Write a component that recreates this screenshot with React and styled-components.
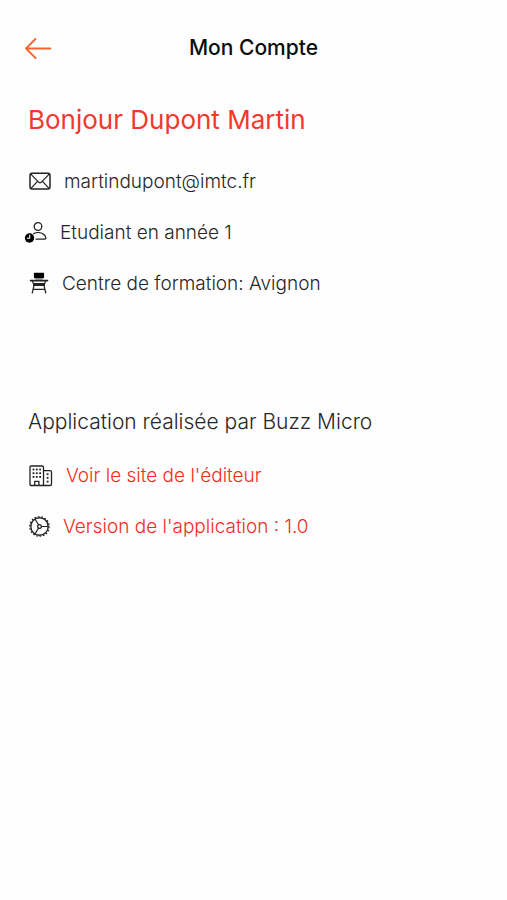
import React from "react";
import styled, { createGlobalStyle } from "styled-components";

const GlobalStyle = createGlobalStyle`
  *, *::before, *::after { box-sizing: border-box; }
  body {
    margin: 0;
    background: #fefefe;
    color: #262628;
    font-family: Inter, "Liberation Sans", sans-serif;
  }
`;

const Page = styled.div`
  min-height: 100vh;
`;

const Header = styled.header`
  display: grid;
  grid-template-columns: 1fr auto 1fr;
  align-items: center;
  height: 56px;
  margin-top: 20px;
  padding: 0 24px;
`;

const BackButton = styled.button`
  display: flex;
  justify-self: start;
  padding: 0;
  border: 0;
  background: none;
  color: #f3672f;
  cursor: pointer;
`;

const PageTitle = styled.h1`
  margin: 0;
  font-size: 21px;
  line-height: 24px;
  font-weight: 500;
  color: #0c0c0c;
`;

const Main = styled.main`
  padding: 0 28px;
`;

const Greeting = styled.h2`
  margin: 28px 0 20px;
  font-size: 26px;
  line-height: 32px;
  font-weight: 400;
  color: #f2382c;
`;

const List = styled.ul`
  display: grid;
  grid-auto-rows: 51px;
  margin: 0;
  padding: 0;
  list-style: none;
`;

const Item = styled.li`
  display: flex;
  align-items: center;
  gap: 12px;
  font-size: 19px;
  line-height: 24px;
  font-weight: 300;
  color: ${(p) => (p.$accent ? "#f22c25" : "inherit")};
`;

const Icon = styled.svg`
  flex: none;
  height: 24px;
  overflow: visible;
  fill: none;
  stroke: currentColor;
  stroke-width: 1.5;
  stroke-linecap: round;
  stroke-linejoin: round;
  color: #222;
`;

const EditorLink = styled.a`
  color: inherit;
  text-decoration: none;
`;

const About = styled.section`
  margin-top: 99px;
`;

const AboutTitle = styled.h3`
  margin: 0 0 14px;
  font-size: 21px;
  line-height: 28px;
  font-weight: 300;
`;

const ArrowIcon = () => (
  <svg width="28" height="24" viewBox="0 0 28 24" fill="none" stroke="currentColor" strokeWidth="1.8" strokeLinecap="round" strokeLinejoin="round" aria-hidden="true">
    <path d="M26.5 12.500H2M11.5 3 2 12.500l9.500 9.500" />
  </svg>
);

const MailIcon = () => (
  <Icon width="24" viewBox="0 0 24 24" aria-hidden="true">
    <rect x="2" y="3.300" width="20" height="15.700" rx="2" />
    <path d="m2.800 4.200 8 8.100q1.200 1 2.400 0l8-8.100M3 18.300l6.500-7M21 18.300l-6.500-7" strokeWidth="1.200" />
  </Icon>
);

const StudentIcon = () => (
  <Icon width="20" viewBox="0 0 20 24" aria-hidden="true">
    <circle cx="10" cy="5.500" r="3.800" strokeWidth="1.300" />
    <path d="M5.500 12.800c3.500-2 8-1.600 10.700 1 1.300 1.300 1.800 2.500 1.600 3.400-.2.700-.8.900-1.500.9H8" strokeWidth="1.300" />
    <circle cx="1.500" cy="17" r="4.700" fill="#000" stroke="none" />
    <path d="M1.700 14.300v2.900H-.7" stroke="#fefefe" strokeWidth="1.100" />
  </Icon>
);

const ChairIcon = () => (
  <Icon width="22" viewBox="0 0 22 24" aria-hidden="true">
    <rect x="5.900" y="0.800" width="10.200" height="5.400" rx="0.800" fill="#000" stroke="none" />
    <path d="M11 6v3" strokeWidth="7" strokeOpacity="0.35" strokeLinecap="butt" />
    <path d="M2.500 8.600h17" strokeWidth="1.600" />
    <path d="M4.500 9.300l1 2.500M17.500 9.300l-1 2.500" strokeWidth="1.200" />
    <rect x="5" y="11" width="12" height="3" rx="0.800" fill="currentColor" stroke="none" />
    <path d="M6 13.500 4.200 21M16 13.500l1.800 7.500M5.500 17.300h11" strokeWidth="1.200" />
  </Icon>
);

const WINDOW_ROWS = [5.5, 9.2, 12.9];

const BuildingIcon = () => (
  <Icon width="26" viewBox="0 0 26 24" aria-hidden="true">
    <path d="M15.500 21.500H3.300q-1.300 0-1.300-1.300V3.300Q2 2 3.300 2h10.900q1.300 0 1.300 1.300zM15.500 6.600h6.700q1.300 0 1.300 1.300v12.300q0 1.300-1.300 1.300h-6.700M6.700 21.300v-4h4.200v4" strokeWidth="1.300" />
    <g fill="currentColor" stroke="none">
      {WINDOW_ROWS.map((y) => (
        <g key={y}>
          <rect x="4.600" y={y - 0.9} width="1.800" height="1.800" />
          <rect x="7.900" y={y - 0.9} width="1.800" height="1.800" />
          <rect x="11.200" y={y - 0.9} width="1.800" height="1.800" />
        </g>
      ))}
      <rect x="18.700" y="9.300" width="1.800" height="1.800" />
      <rect x="18.700" y="13" width="1.800" height="1.800" />
      <rect x="18.700" y="16.700" width="1.800" height="1.800" />
    </g>
  </Icon>
);

const GearIcon = () => (
  <Icon width="23" viewBox="0 0 23 24" aria-hidden="true">
    <circle cx="11.500" cy="11.500" r="8.700" strokeWidth="1.400" />
    <circle cx="11.500" cy="11.500" r="9.800" strokeWidth="1.100" strokeLinecap="butt" pathLength="108" strokeDasharray="3 3" />
    <circle cx="11.500" cy="11.500" r="1.900" strokeWidth="1.200" />
    <path d="M13.400 11.500h6.500M10.500 9.800l-3.400-5.600M10.500 13.200l-3.400 5.600" strokeWidth="1.200" />
  </Icon>
);

export default function App() {
  return (
    <Page>
      <GlobalStyle />
      <Header>
        <BackButton type="button" aria-label="Retour">
          <ArrowIcon />
        </BackButton>
        <PageTitle>Mon Compte</PageTitle>
      </Header>
      <Main>
        <Greeting>Bonjour Dupont Martin</Greeting>
        <List>
          <Item><MailIcon />martindupont@imtc.fr</Item>
          <Item><StudentIcon />Etudiant en année 1</Item>
          <Item><ChairIcon />Centre de formation: Avignon</Item>
        </List>
        <About>
          <AboutTitle>Application réalisée par Buzz Micro</AboutTitle>
          <List>
            <Item $accent>
              <BuildingIcon />
              <EditorLink href="#editeur">Voir le site de l'éditeur</EditorLink>
            </Item>
            <Item $accent><GearIcon />Version de l'application : 1.0</Item>
          </List>
        </About>
      </Main>
    </Page>
  );
}
